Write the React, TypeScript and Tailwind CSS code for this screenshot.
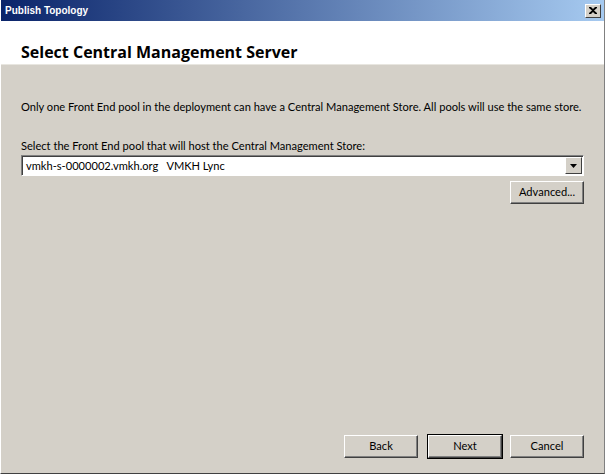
import React from "react";

export default function App() {
  const btn =
    "h-[23px] w-[74px] bg-[#d4d0c8] text-[11.1px] text-black border border-t-white border-l-white border-r-[#404040] border-b-[#404040] shadow-[inset_-1px_-1px_0_#808080]";
  return (
    <div className="w-[605px] h-[474px] bg-[#d4d0c8] flex flex-col overflow-hidden border-l border-l-white border-r border-r-[#808080] border-b border-b-[#404040]" style={{ fontFamily: 'Lato, "Open Sans", sans-serif' }}>
      <div className="h-[21px] shrink-0 flex items-center justify-between pl-[4px] pr-[3px] bg-[linear-gradient(90deg,#0a246a,#a6caf0)]">
        <span className="text-white font-bold text-[10px]" style={{ fontFamily: '"Liberation Sans", sans-serif' }}>Publish Topology</span>
        <div className="w-[16px] h-[14px] bg-[#d4d0c8] border border-t-white border-l-white border-r-[#404040] border-b-[#404040] flex items-center justify-center">
          <svg width="8" height="7" viewBox="0 0 8 7"><path d="M0 0h2l2 2 2-2h2v1L5 3.5 8 6v1H6L4 5 2 7H0V6l3-2.5L0 1z" fill="#000" /></svg>
        </div>
      </div>
      <div className="h-[44px] shrink-0 bg-white flex items-center pl-[20px] pt-[19px] border-b border-b-[#e8e6e0]">
        <span className="font-bold text-[16px] text-[#000]" style={{ fontFamily: '"Open Sans", sans-serif' }}>Select Central Management Server</span>
      </div>
      <div className="flex-1 flex flex-col px-[20px] pt-[34px] text-[11.1px] text-black">
        <div className="leading-[16px] whitespace-nowrap">Only one Front End pool in the deployment can have a Central Management Store. All pools will use the same store.</div>
        <div className="mt-[23px] leading-[16px]">Select the Front End pool that will host the Central Management Store:</div>
        <div className="mt-[1px] h-[21px] flex bg-white border border-t-[#808080] border-l-[#808080] border-b-white border-r-white shadow-[inset_1px_1px_0_#404040]">
          <div className="flex-1 flex items-center pl-[4px] leading-none">vmkh-s-0000002.vmkh.org&nbsp;&nbsp;&nbsp;VMKH Lync</div>
          <div className="w-[17px] h-[17px] mt-[1px] mr-[1px] bg-[#d4d0c8] border border-t-white border-l-white border-r-[#404040] border-b-[#404040] flex items-center justify-center">
            <svg width="7" height="4" viewBox="0 0 7 4"><path d="M0 0h7L3.5 4z" fill="#000" /></svg>
          </div>
        </div>
        <div className="flex justify-end mt-[5px]">
          <button className="h-[23px] w-[74px] bg-[#d4d0c8] text-[11.1px] border border-t-white border-l-white border-r-[#404040] border-b-[#404040] shadow-[inset_-1px_-1px_0_#808080]">Advanced...</button>
        </div>
        <div className="flex-1" />
        <div className="flex justify-end mb-[15px]">
          <button className={btn + " text-[#a0a0a0] mr-[10px]"}>Back</button>
          <button className={btn + " outline outline-1 outline-black mr-[8px]"}>Next</button>
          <button className={btn}>Cancel</button>
        </div>
      </div>
    </div>
  );
}
